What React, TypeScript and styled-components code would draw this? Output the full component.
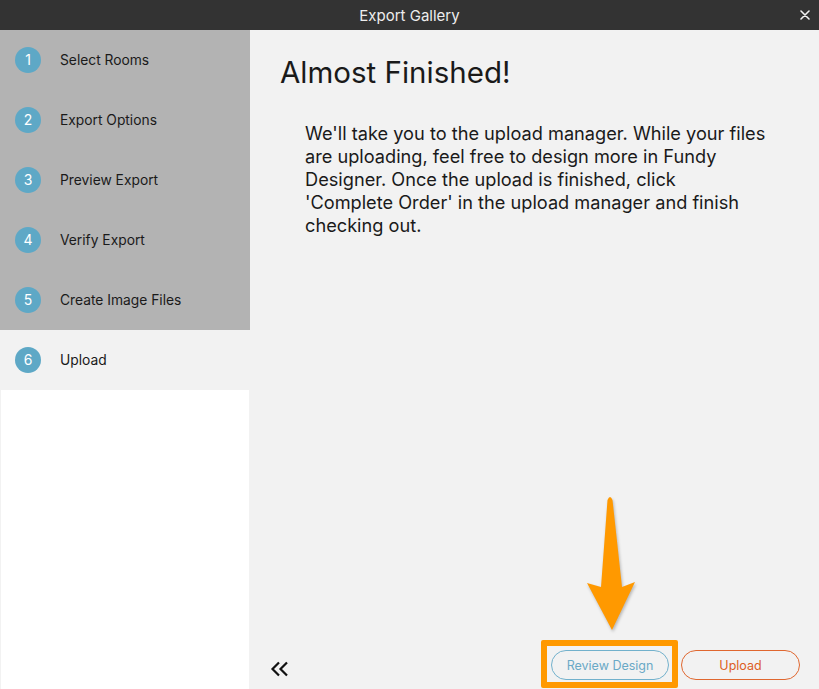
import React from "react";
import styled, { createGlobalStyle } from "styled-components";

const GlobalStyle = createGlobalStyle`
  html, body {
    margin: 0;
    padding: 0;
    background: #f2f2f2;
  }
  * {
    box-sizing: border-box;
  }
`;

const Window = styled.div`
  width: 819px;
  height: 689px;
  display: flex;
  flex-direction: column;
  font-family: Inter, "Noto Sans", sans-serif;
  color: #1a1a1a;
  overflow: hidden;
`;

const TitleBar = styled.div`
  height: 30px;
  flex: none;
  background: #333333;
  color: #ededed;
  font-size: 15px;
  display: flex;
  align-items: center;
  justify-content: center;
  position: relative;
`;

const CloseButton = styled.div`
  position: absolute;
  right: 9px;
  top: 10px;
  width: 10px;
  height: 10px;
  display: flex;
`;

const Body = styled.div`
  flex: 1;
  display: flex;
  min-height: 0;
`;

const Sidebar = styled.div`
  width: 250px;
  flex: none;
  display: flex;
  flex-direction: column;
  background: #f2f2f2;
`;

const Step = styled.div<{ $active?: boolean }>`
  height: 60px;
  flex: none;
  display: flex;
  align-items: center;
  padding-left: 15px;
  padding-bottom: 1px;
  gap: 19px;
  background: ${({ $active }) => ($active ? "#f2f2f2" : "#b3b3b3")};
  font-size: 13.8px;
`;

const StepNumber = styled.div`
  width: 26px;
  height: 26px;
  border-radius: 50%;
  background: #5ea8c6;
  color: #ffffff;
  font-size: 14px;
  display: flex;
  align-items: center;
  justify-content: center;
`;

const SidebarFill = styled.div`
  flex: 1;
  margin: 0 1px;
  background: #ffffff;
`;

const Main = styled.div`
  flex: 1;
  display: flex;
  flex-direction: column;
  padding: 22px 19px 9px 30px;
  background: #f2f2f2;
`;

const Heading = styled.h1`
  margin: 0;
  font-size: 29.5px;
  font-weight: 400;
  line-height: 40px;
`;

const Message = styled.p`
  margin: 30px 0 0 25px;
  max-width: 463px;
  font-size: 18.2px;
  line-height: 23px;
`;

const Footer = styled.div`
  margin-top: auto;
  display: flex;
  align-items: flex-end;
`;

const BackButton = styled.div`
  width: 20px;
  height: 16px;
  margin-bottom: 3px;
  margin-left: -10px;
  display: flex;
`;

const Actions = styled.div`
  margin-left: auto;
  display: flex;
  gap: 12px;
  align-items: flex-end;
`;

const Highlighted = styled.div`
  position: relative;
`;

const HighlightBox = styled.div`
  position: absolute;
  left: -10px;
  top: -10px;
  right: -9px;
  bottom: -8px;
  border: 6px solid #ff9900;
  border-radius: 2px;
  pointer-events: none;
`;

const ArrowMark = styled.svg`
  position: absolute;
  left: 29px;
  top: -160px;
  overflow: visible;
  filter: drop-shadow(1px 2px 1.5px rgba(0, 0, 0, 0.25));
`;

const PillButton = styled.button<{ $tone: "blue" | "orange" }>`
  height: 30px;
  width: ${({ $tone }) => ($tone === "blue" ? "118px" : "119px")};
  border-radius: 15px;
  background: transparent;
  font-family: Inter, "Noto Sans", sans-serif;
  font-size: 12.5px;
  padding: 0;
  border: 1px solid
    ${({ $tone }) => ($tone === "blue" ? "#72b1cc" : "#e0672f")};
  color: ${({ $tone }) => ($tone === "blue" ? "#6aa9c6" : "#dd5e22")};
`;

const steps = [
  "Select Rooms",
  "Export Options",
  "Preview Export",
  "Verify Export",
  "Create Image Files",
  "Upload",
];

export default function App() {
  return (
    <>
      <GlobalStyle />
      <Window>
        <TitleBar>
          Export Gallery
          <CloseButton>
            <svg width="10" height="10" viewBox="0 0 10 10">
              <path
                d="M1 1 L9 9 M9 1 L1 9"
                stroke="#f2f2f2"
                strokeWidth="1.6"
                strokeLinecap="round"
              />
            </svg>
          </CloseButton>
        </TitleBar>
        <Body>
          <Sidebar>
            {steps.map((label, i) => (
              <Step key={label} $active={i === steps.length - 1}>
                <StepNumber>{i + 1}</StepNumber>
                {label}
              </Step>
            ))}
            <SidebarFill />
          </Sidebar>
          <Main>
            <Heading>Almost Finished!</Heading>
            <Message>
              We'll take you to the upload manager. While your files are
              uploading, feel free to design more in Fundy Designer. Once the
              upload is finished, click 'Complete Order' in the upload manager
              and finish checking out.
            </Message>
            <Footer>
              <BackButton>
                <svg width="20" height="16" viewBox="0 0 20 16">
                  <path
                    d="M9 1.5 L2.5 8 L9 14.5 M17 1.5 L10.5 8 L17 14.5"
                    fill="none"
                    stroke="#111"
                    strokeWidth="2.2"
                  />
                </svg>
              </BackButton>
              <Actions>
                <Highlighted>
                  <HighlightBox />
                  <ArrowMark width="60" height="145" viewBox="0 0 60 145">
                    <path
                      d="M27.5 10 Q30 4 32.5 10 L42 97 L55 92 L32 140 L7 93 L21 97 Z"
                      fill="#ff9900"
                    />
                  </ArrowMark>
                  <PillButton $tone="blue">Review Design</PillButton>
                </Highlighted>
                <PillButton $tone="orange">Upload</PillButton>
              </Actions>
            </Footer>
          </Main>
        </Body>
      </Window>
    </>
  );
}
